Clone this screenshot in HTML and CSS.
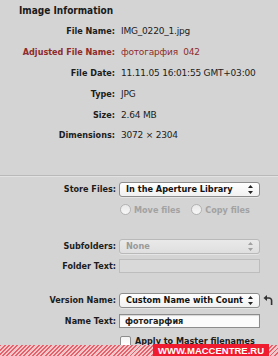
FILE: index.html
```html
<!DOCTYPE html>
<html lang="ru">
<head>
    <meta charset="UTF-8">
    <meta name="viewport" content="width=device-width, initial-scale=1.0">
    <title>Image Information</title>
    <link rel="stylesheet" href="styles.css">
</head>
<body>
    <div class="inspector">
        <section class="info">
            <h2 class="info-title">Image Information</h2>
            <dl class="info-rows">
                <dt>File Name:</dt>
                <dd>IMG_0220_1.jpg</dd>
                <dt class="adjusted">Adjusted File Name:</dt>
                <dd class="adjusted">фотогарфия&nbsp; 042</dd>
                <dt>File Date:</dt>
                <dd>11.11.05 16:01:55 GMT+03:00</dd>
                <dt>Type:</dt>
                <dd>JPG</dd>
                <dt>Size:</dt>
                <dd>2.64 MB</dd>
                <dt>Dimensions:</dt>
                <dd>3072 × 2304</dd>
            </dl>
        </section>

        <div class="divider"></div>

        <div class="options">
            <div class="row row-store">
                <span class="label">Store Files:</span>
                <div class="popup">
                    <span class="popup-text">In the Aperture Library</span>
                    <svg class="arrows" width="5" height="9" viewBox="0 0 5 9"><path d="M2.5 0L5 3H0z M2.5 9L5 6H0z"/></svg>
                </div>
            </div>

            <div class="row row-radios">
                <span class="label"></span>
                <div class="radios">
                    <span class="radio"></span><span class="radio-text">Move files</span>
                    <span class="radio"></span><span class="radio-text">Copy files</span>
                </div>
            </div>

            <div class="row row-sub">
                <span class="label">Subfolders:</span>
                <div class="popup disabled">
                    <span class="popup-text">None</span>
                    <svg class="arrows" width="5" height="9" viewBox="0 0 5 9"><path d="M2.5 0L5 3H0z M2.5 9L5 6H0z"/></svg>
                </div>
            </div>

            <div class="row row-folder">
                <span class="label">Folder Text:</span>
                <div class="field disabled"></div>
            </div>

            <div class="row row-version">
                <span class="label">Version Name:</span>
                <div class="popup">
                    <span class="popup-text">Custom Name with Count</span>
                    <svg class="arrows" width="5" height="9" viewBox="0 0 5 9"><path d="M2.5 0L5 3H0z M2.5 9L5 6H0z"/></svg>
                </div>
                <svg class="undo" width="10" height="10" viewBox="0 0 10 10">
                    <path d="M0.5 3L4 0v6z" fill="#333"/>
                    <path d="M3.5 3H6a2.6 2.6 0 0 1 2.6 2.6V10" fill="none" stroke="#333" stroke-width="1.6"/>
                </svg>
            </div>

            <div class="row row-name">
                <span class="label">Name Text:</span>
                <div class="field">фотогарфия</div>
            </div>

            <div class="row row-apply">
                <span class="label"></span>
                <span class="checkbox"></span>
                <span class="check-text">Apply to Master filenames</span>
            </div>
        </div>

        <div class="watermark">
            <span class="watermark-badge">WWW.MACCENTRE.RU</span>
        </div>
    </div>
</body>
</html>
```

FILE: styles.css
```css
body {
    margin: 0;
    padding: 0;
    background-color: #d4d4d4;
    font-family: 'DejaVu Sans', Verdana, sans-serif;
    font-size: 9px;
    color: #1c1c1c;
}

.inspector {
    position: relative;
    width: 278px;
    height: 356px;
    overflow: hidden;
}

.info {
    padding-top: 4px;
}

.info-title {
    margin: 0 0 0 19px;
    font-size: 10px;
    font-weight: bold;
    font-stretch: condensed;
    line-height: 14px;
    color: #1a1a1a;
}

.info-rows {
    display: grid;
    grid-template-columns: 116px 1fr;
    grid-auto-rows: 20.8px;
    align-items: center;
    margin: 3px 0 0;
}

.info-rows dt {
    text-align: right;
    font-weight: bold;
    font-stretch: condensed;
    padding-right: 1px;
}

.info-rows dd {
    margin: 0 0 0 5px;
    letter-spacing: -0.2px;
}

.info-rows .adjusted {
    color: #8e2b2b;
}

.divider {
    margin-top: 29px;
    height: 1px;
    background-color: #b9b9b9;
    border-bottom: 1px solid #e2e2e2;
}

.options {
    padding-top: 5px;
}

.row {
    display: flex;
    align-items: center;
}

.row .label {
    width: 116px;
    flex: none;
    text-align: right;
    font-weight: bold;
    font-stretch: condensed;
    padding-right: 3px;
}

.row-radios { margin-top: 7px; height: 12px; }
.row-sub { margin-top: 23px; }
.row-folder { margin-top: 5px; }
.row-version { margin-top: 20px; }
.row-name { margin-top: 6px; }
.row-apply { margin-top: 8px; }

.popup {
    width: 141px;
    height: 15px;
    box-sizing: border-box;
    display: flex;
    align-items: center;
    justify-content: space-between;
    padding: 0 6px 0 6px;
    border: 1px solid #8d8d8d;
    border-radius: 3px;
    background: linear-gradient(#ffffff, #f1f1f1);
    box-shadow: 0 1px 0 rgba(255, 255, 255, 0.4);
    white-space: nowrap;
}

.popup-text {
    font-size: 9.1px;
    font-weight: bold;
    font-stretch: condensed;
    color: #111;
}

.arrows {
    flex: none;
    fill: #222;
}

.popup.disabled {
    border-color: #b9b9b9;
    background: linear-gradient(#e9e9e9, #dfdfdf);
}

.popup.disabled .popup-text {
    color: #9a9a9a;
}

.popup.disabled .arrows {
    fill: #a0a0a0;
}

.field {
    width: 141px;
    height: 14px;
    box-sizing: border-box;
    padding: 0 5px;
    border: 1px solid #8c8c8c;
    background-color: #fbfbfb;
    line-height: 12px;
    font-weight: bold;
    font-stretch: condensed;
    box-shadow: inset 0 1px 1px rgba(0, 0, 0, 0.15);
}

.field.disabled {
    border-color: #bdbdbd;
    background-color: #d9d9d9;
    box-shadow: none;
}

.undo {
    margin-left: 3px;
}

.radios {
    display: flex;
    align-items: center;
}

.radio {
    width: 11px;
    height: 11px;
    box-sizing: border-box;
    border: 1px solid #b3b3b3;
    border-radius: 50%;
    background: linear-gradient(#e9e9e9, #f7f7f7);
    margin-left: 1px;
}

.radio-text {
    margin: 0 10px 0 3px;
    color: #a2a2a2;
    font-weight: bold;
    font-stretch: condensed;
}

.checkbox {
    width: 11px;
    height: 11px;
    box-sizing: border-box;
    border: 1px solid #8d8d8d;
    border-radius: 2px;
    background: linear-gradient(#f4f4f4, #ffffff);
    margin-left: 1px;
}

.check-text {
    margin-left: 4px;
    font-weight: bold;
    font-stretch: condensed;
}

.watermark {
    position: absolute;
    left: 0;
    right: 0;
    bottom: 0;
    height: 11px;
    background: repeating-linear-gradient(135deg, #e8606b 0 1.4px, #eec8cb 1.4px 3px);
}

.watermark-badge {
    position: absolute;
    left: 153px;
    top: -1px;
    width: 116px;
    height: 12px;
    background-color: #ee1c2e;
    color: #ffffff;
    font-family: 'Liberation Sans', Arial, sans-serif;
    font-weight: bold;
    font-size: 9.5px;
    line-height: 13px;
    text-align: center;
}
```
